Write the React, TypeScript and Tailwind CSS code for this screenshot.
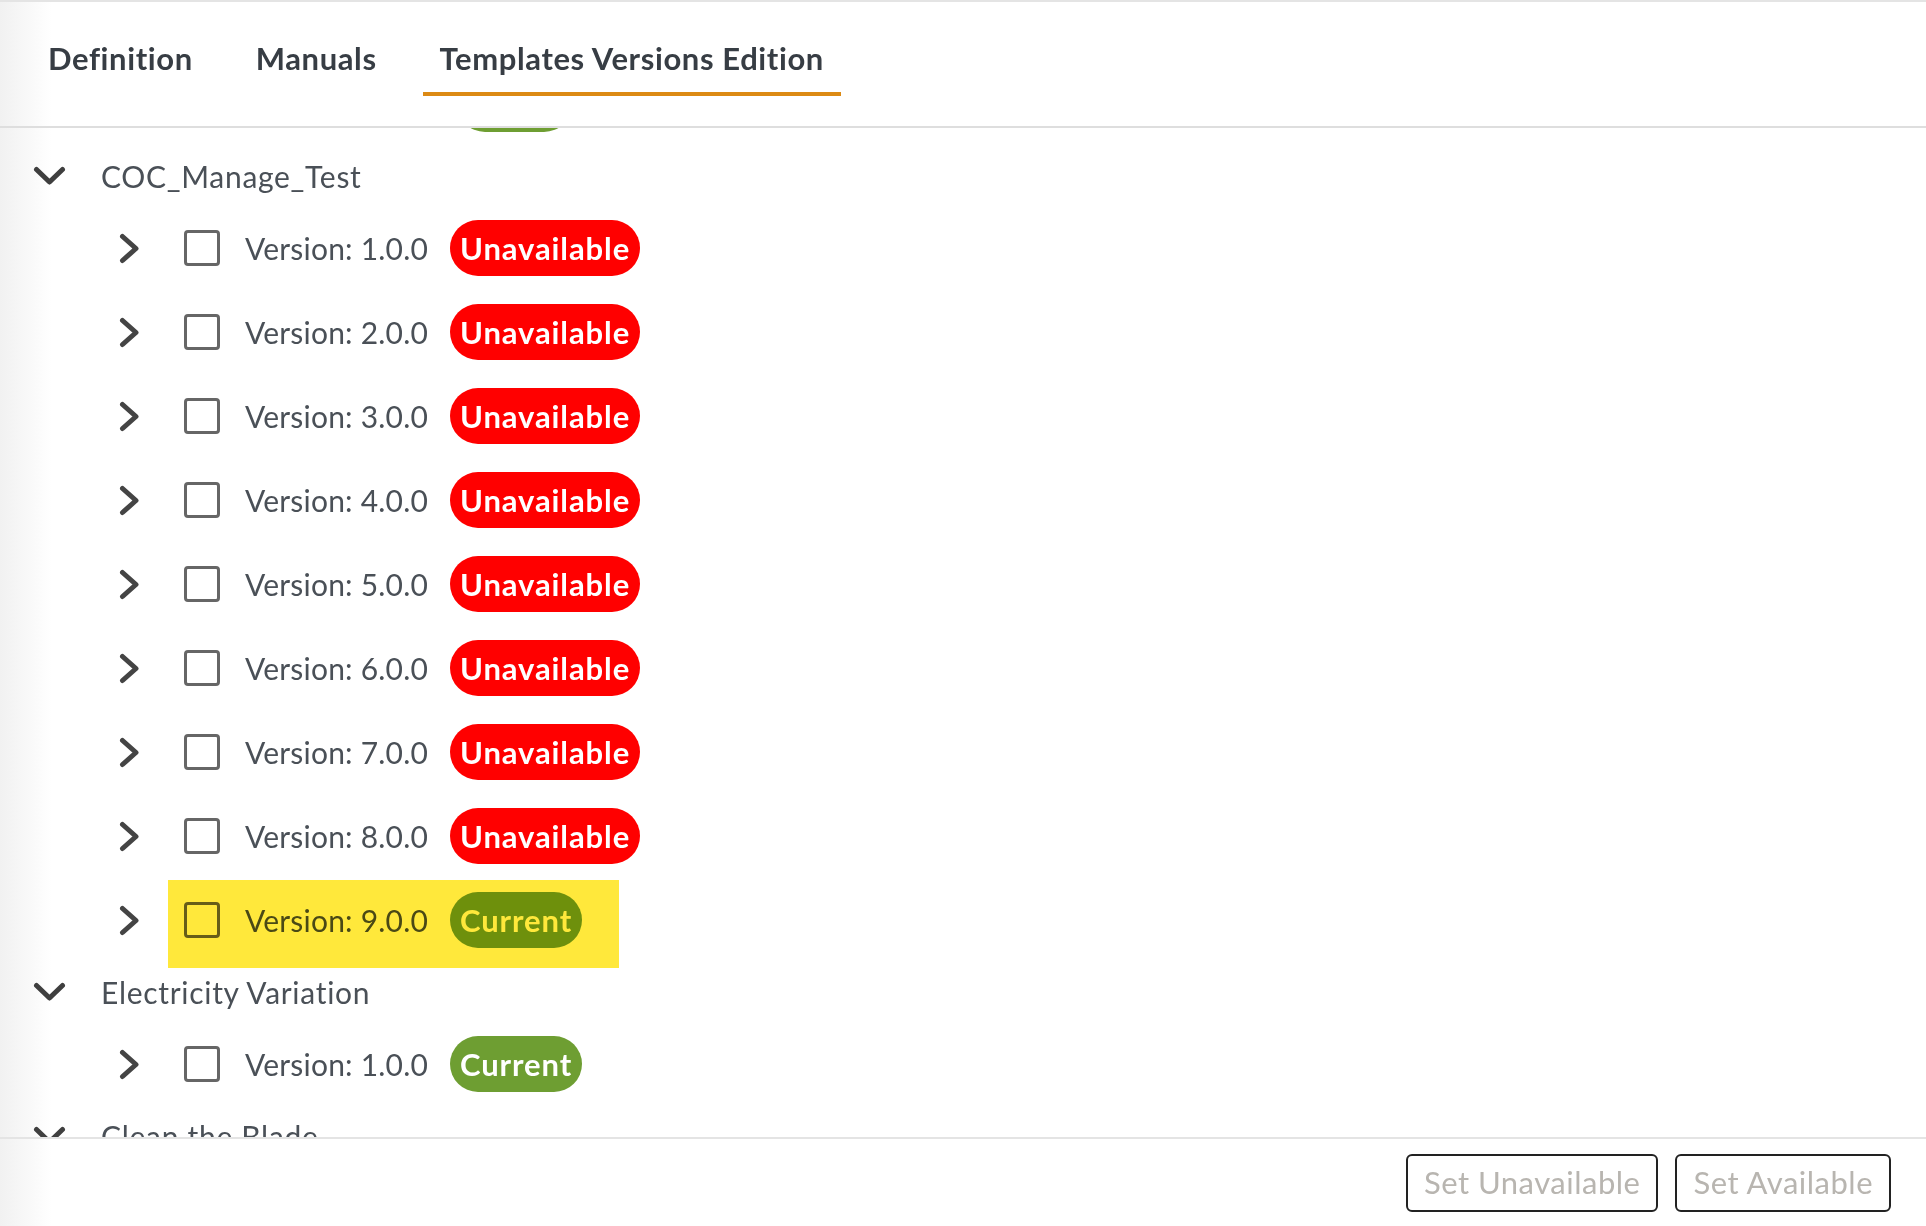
import { clsx } from 'clsx'

type Status = 'Unavailable' | 'Current'

type Version = { label: string; status: Status; highlight?: boolean }

type Group = { name: string; versions: Version[] }

const GROUPS: Group[] = [
  {
    name: 'COC_Manage_Test',
    versions: [
      { label: '1.0.0', status: 'Unavailable' },
      { label: '2.0.0', status: 'Unavailable' },
      { label: '3.0.0', status: 'Unavailable' },
      { label: '4.0.0', status: 'Unavailable' },
      { label: '5.0.0', status: 'Unavailable' },
      { label: '6.0.0', status: 'Unavailable' },
      { label: '7.0.0', status: 'Unavailable' },
      { label: '8.0.0', status: 'Unavailable' },
      { label: '9.0.0', status: 'Current', highlight: true },
    ],
  },
  { name: 'Electricity Variation', versions: [{ label: '1.0.0', status: 'Current' }] },
  { name: 'Clean the Blade', versions: [{ label: '1.0.0', status: 'Current' }] },
]

const TABS = ['Definition', 'Manuals', 'Templates Versions Edition']

function ChevronDown() {
  return (
    <svg viewBox="0 0 33 20" className="h-[20px] w-[33px] shrink-0" aria-hidden="true">
      <path d="M3.5 3.5 16.5 16 29.5 3.5" fill="none" stroke="#3f3f3f" strokeWidth="5" strokeLinecap="round" strokeLinejoin="round" />
    </svg>
  )
}

function ChevronRight() {
  return (
    <svg viewBox="0 0 21 31" className="h-[31px] w-[21px] shrink-0" aria-hidden="true">
      <path d="M3.5 3.5 17 15.5 3.5 27.5" fill="none" stroke="#444" strokeWidth="5" strokeLinecap="round" strokeLinejoin="round" />
    </svg>
  )
}

function Pill({ status }: { status: Status }) {
  return (
    <span
      className={clsx(
        'flex h-[56px] items-center rounded-full px-[10px] text-[31px] font-bold tracking-[0.9px] text-white',
        status === 'Current' ? 'bg-[#6e9e32]' : 'bg-[#ff0000]',
      )}
    >
      {status}
    </span>
  )
}

function VersionRow({ v }: { v: Version }) {
  return (
    <div className="relative flex h-[84px] items-center pl-[119px]">
      <ChevronRight />
      <span className="ml-[44px] size-[36px] shrink-0 rounded-[4px] border-[3px] border-[#666]" />
      <span className="ml-[25px] text-[30px] leading-[40px] tracking-[0.2px] text-[#4a5057]">Version: {v.label}</span>
      <span className="ml-[22px]">
        <Pill status={v.status} />
      </span>
      {v.highlight && (
        <span className="pointer-events-none absolute left-[168px] top-[2px] h-[88px] w-[451px] bg-[#ffe83b] mix-blend-multiply" />
      )}
    </div>
  )
}

function GroupHeader({ name }: { name: string }) {
  return (
    <div className="flex h-[60px] items-center pl-[33px]">
      <ChevronDown />
      <span className="ml-[35px] text-[30px] leading-[40px] tracking-[0.7px] text-[#4a5057]">{name}</span>
    </div>
  )
}

export default function App() {
  return (
    <div className="flex h-screen flex-col overflow-hidden bg-[linear-gradient(to_right,#f1f1f1,#ffffff_52px)] font-['Lato','Open_Sans',sans-serif]">
      <div className="h-[128px] shrink-0 border-y-2 border-t-[#e4e4e4] border-b-[#dedede]">
        <div className="flex gap-[29px] pl-[31px] pt-[36px]">
          {TABS.map((t, i) => (
            <div
              key={t}
              className={clsx(
                'border-b-4 px-[17px] pb-[14px] text-[31px] font-bold leading-[40px] tracking-[0.6px] text-[#373d44]',
                i === 2 ? 'border-[#dc8a14]' : 'border-transparent',
              )}
            >
              {t}
            </div>
          ))}
        </div>
      </div>

      <div className="min-h-0 flex-1 overflow-hidden">
        <div className="-mt-[66px]">
          {/* tail of the row scrolled above the fold: only its pill shows */}
          <div className="flex h-[84px] items-center pl-[457px]">
            <span className="h-[56px] w-[115px] rounded-full bg-[#6e9e32]" />
          </div>
          {GROUPS.map((g) => (
            <div key={g.name}>
              <GroupHeader name={g.name} />
              {g.versions.map((v) => (
                <VersionRow key={v.label} v={v} />
              ))}
            </div>
          ))}
        </div>
      </div>

      <div className="flex h-[89px] shrink-0 items-center justify-end gap-[17px] border-t-2 border-[#e4e4e4] pr-[35px]">
        <button type="button" className="h-[58px] rounded-[6px] border-2 border-[#222] px-[16px] text-[31px] tracking-[0.5px] text-[#b8b5b0]">
          Set Unavailable
        </button>
        <button type="button" className="h-[58px] rounded-[6px] border-2 border-[#222] px-[16px] text-[31px] tracking-[0.5px] text-[#b8b5b0]">
          Set Available
        </button>
      </div>
    </div>
  )
}
